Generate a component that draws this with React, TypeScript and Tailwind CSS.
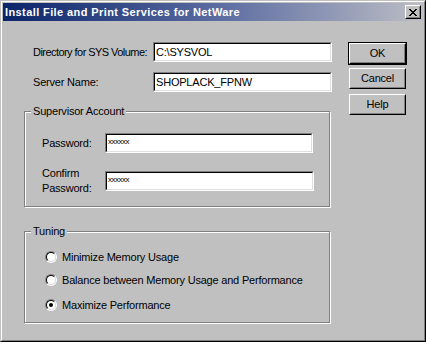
import React from "react";

const sunken =
  "border border-t-[#808080] border-l-[#808080] border-r-white border-b-white";
const sunkenInner =
  "border border-t-black border-l-black border-r-[#dfdfdf] border-b-[#dfdfdf]";

function TextBox({ value, width, small }: { value: string; width: string; small?: boolean }) {
  return (
    <div className={`${sunken} ${width} h-[20px]`}>
      <div
        className={`${sunkenInner} h-full bg-white flex pl-px ${small ? "items-start pt-[3px]" : "items-center"}`}
      >
        <span className={small ? "text-[8px] leading-none tracking-[-0.5px]" : "leading-none"}>
          {value}
        </span>
      </div>
    </div>
  );
}

function Button({ label, isDefault }: { label: string; isDefault?: boolean }) {
  const face = (
    <div className="h-full border border-t-white border-l-white border-r-black border-b-black">
      <div className="h-full border border-t-[#c0c0c0] border-l-[#c0c0c0] border-r-[#808080] border-b-[#808080] flex items-center justify-center">
        {label}
      </div>
    </div>
  );
  if (isDefault) {
    return <div className="w-[59px] h-[23px] border border-black">{face}</div>;
  }
  return <div className="w-[57px] h-[21px] mx-px">{face}</div>;
}

function GroupBox({
  title,
  className,
  children,
}: {
  title: string;
  className: string;
  children: React.ReactNode;
}) {
  return (
    <div
      className={`relative w-[306px] border border-[#808080] shadow-[inset_1px_1px_0_white,1px_1px_0_white] ${className}`}
    >
      <span className="absolute left-[6px] top-[-8px] bg-[#c0c0c0] px-[2px] leading-[14px]">
        {title}
      </span>
      {children}
    </div>
  );
}

function Radio({ label, checked }: { label: string; checked?: boolean }) {
  return (
    <div className="flex items-center h-[14px]">
      <div className="w-[12px] h-[12px] rounded-full border border-t-[#808080] border-l-[#808080] border-r-white border-b-white">
        <div className="w-full h-full rounded-full border border-t-black border-l-black border-r-[#dfdfdf] border-b-[#dfdfdf] bg-white flex items-center justify-center">
          {checked && <div className="w-[4px] h-[4px] rounded-full bg-black" />}
        </div>
      </div>
      <span className="ml-[5px]">{label}</span>
    </div>
  );
}

export default function App() {
  return (
    <div className="w-[426px] h-[342px] bg-[#c0c0c0] font-['Liberation_Sans',sans-serif] text-[11px] tracking-[-0.2px] whitespace-nowrap text-black border border-t-[#c0c0c0] border-l-[#c0c0c0] border-r-black border-b-black">
      <div className="h-full border border-t-white border-l-white border-r-[#808080] border-b-[#808080] p-px">
        {/* title bar */}
        <div className="h-[18px] flex items-center justify-between bg-gradient-to-r from-[#0a246a] via-[#5a6aa0] to-[#bdbdc4] pl-[2px] pr-[2px]">
          <span className="text-white font-bold text-[11px] tracking-[0.4px]">
            Install File and Print Services for NetWare
          </span>
          <div className="w-[16px] h-[14px] border border-t-white border-l-white border-r-black border-b-black">
            <div className="h-full border border-t-[#c0c0c0] border-l-[#c0c0c0] border-r-[#808080] border-b-[#808080] bg-[#c0c0c0] flex items-center justify-center">
              <svg width="8" height="7" viewBox="0 0 8 7" shapeRendering="crispEdges">
                <path
                  d="M0 0h2v1h-2zM6 0h2v1h-2zM1 1h2v1h-2zM5 1h2v1h-2zM2 2h4v1h-4zM3 3h2v1h-2zM2 4h4v1h-4zM1 5h2v1h-2zM5 5h2v1h-2zM0 6h2v1h-2zM6 6h2v1h-2z"
                  fill="black"
                />
              </svg>
            </div>
          </div>
        </div>

        {/* content */}
        <div className="flex pl-[21px]">
          <div className="w-[308px] pt-[21px]">
            <div className="flex items-center">
              <span className="w-[129px] pl-[9px] tracking-[-0.55px]">Directory for SYS Volume:</span>
              <TextBox value="C:\SYSVOL" width="w-[179px]" />
            </div>
            <div className="flex items-center mt-[10px]">
              <span className="w-[129px] pl-[9px]">Server Name:</span>
              <TextBox value="SHOPLACK_FPNW" width="w-[179px]" />
            </div>

            <GroupBox title="Supervisor Account" className="mt-[19px] h-[96px]">
              <div className="pt-[21px] pl-[17px]">
                <div className="flex items-center">
                  <span className="w-[63px]">Password:</span>
                  <TextBox value="xxxxxx" width="w-[208px]" small />
                </div>
                <div className="flex items-center mt-[13px]">
                  <span className="w-[63px] leading-[15px]">
                    Confirm
                    <br />
                    Password:
                  </span>
                  <TextBox value="xxxxxx" width="w-[209px]" small />
                </div>
              </div>
            </GroupBox>

            <GroupBox title="Tuning" className="mt-[24px] h-[92px]">
              <div className="pt-[18px] pl-[20px] flex flex-col gap-[9px]">
                <Radio label="Minimize Memory Usage" />
                <Radio label="Balance between Memory Usage and Performance" />
                <div className="mt-[2px]">
                  <Radio label="Maximize Performance" checked />
                </div>
              </div>
            </GroupBox>
          </div>

          <div className="ml-[16px] pt-[21px] flex flex-col gap-[3px]">
            <Button label="OK" isDefault />
            <Button label="Cancel" />
            <div className="mt-[2px]">
              <Button label="Help" />
            </div>
          </div>
        </div>
      </div>
    </div>
  );
}
